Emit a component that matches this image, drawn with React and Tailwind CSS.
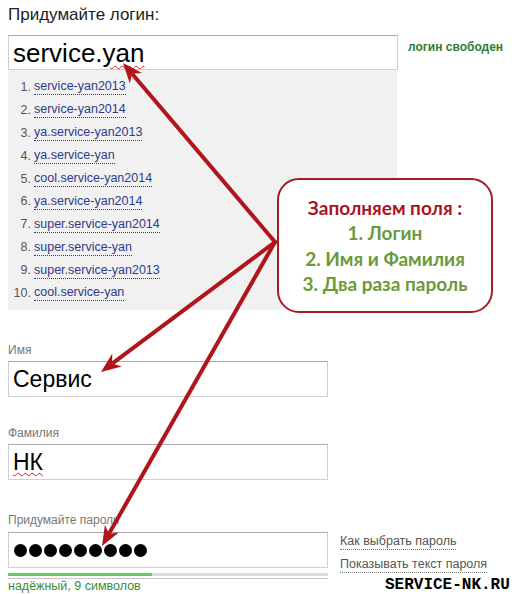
import React from "react";

const suggestions = [
  "service-yan2013",
  "service-yan2014",
  "ya.service-yan2013",
  "ya.service-yan",
  "cool.service-yan2014",
  "ya.service-yan2014",
  "super.service-yan2014",
  "super.service-yan",
  "super.service-yan2013",
  "cool.service-yan",
];

function Arrows() {
  const c = "#b0151c";
  const sx = 275, sy = 242;
  const tips = [
    [123, 63],
    [101, 372],
    [102, 546],
  ];
  return (
    <svg className="absolute left-0 top-0 pointer-events-none" width="516" height="594" viewBox="0 0 516 594">
      {tips.map(([tx, ty], i) => {
        const dx = tx - sx, dy = ty - sy;
        const len = Math.hypot(dx, dy);
        const ux = dx / len, uy = dy / len;
        const hl = 20, hw = 8;
        const bx = tx - ux * hl, by = ty - uy * hl;
        const px = -uy, py = ux;
        const lx = tx - ux * (hl - 4), ly = ty - uy * (hl - 4);
        return (
          <g key={i}>
            <line x1={sx} y1={sy} x2={lx} y2={ly} stroke={c} strokeWidth="4" strokeLinecap="round" />
            <polygon
              points={`${tx},${ty} ${bx + px * hw},${by + py * hw} ${tx - ux * (hl - 6)},${ty - uy * (hl - 6)} ${bx - px * hw},${by - py * hw}`}
              fill={c}
            />
          </g>
        );
      })}
    </svg>
  );
}

export default function App() {
  return (
    <div className="relative w-[516px] h-[594px] overflow-hidden bg-white font-['Liberation_Sans',Arial,sans-serif]">
      <div className="pl-[8px] pt-[5px]">
        <div className="text-[17px] leading-[20px] text-[#222]">Придумайте логин:</div>

        <div className="mt-[10px] flex items-start">
          <div className="w-[390px]">
            <div className="h-[35px] border border-[#d0d0d0] border-t-[#a8a8a8] bg-white flex items-center pl-[4px]">
              <span className="text-[26px] leading-[30px] text-black">
                service.
                <span className="underline decoration-wavy decoration-[#d02020] decoration-1 underline-offset-[3px]">yan</span>
              </span>
            </div>
            <div className="w-[389px] h-[240px] bg-[#f1f1f1] pt-[6px] text-[12.5px]">
              {suggestions.map((s, i) => (
                <div key={i} className="flex items-center h-[22.9px]">
                  <span className="w-[26px] text-right text-[#555] pr-[3px] leading-[15px]">{i + 1}.</span>
                  <span className="text-[#2e3a8c] border-b border-dotted border-[#2e3a8c] leading-[15px]">{s}</span>
                </div>
              ))}
            </div>
          </div>
          <div className="ml-[10px] mt-[3px] text-[12px] font-bold text-[#2f7d32]">логин свободен</div>
        </div>

        <div className="mt-[33px] text-[12px] leading-[14px] text-[#777]">Имя</div>
        <div className="mt-[4px] w-[320px] h-[36px] border border-[#d0d0d0] border-t-[#a8a8a8] flex items-center pl-[4px]">
          <span className="text-[23px] leading-[28px] text-black">Сервис</span>
        </div>

        <div className="mt-[29px] text-[12px] leading-[14px] text-[#777]">Фамилия</div>
        <div className="mt-[4px] w-[320px] h-[36px] border border-[#d0d0d0] border-t-[#a8a8a8] flex items-center pl-[4px]">
          <span className="text-[23px] leading-[28px] text-black underline decoration-wavy decoration-[#d02020] decoration-1 underline-offset-[2px]">НК</span>
        </div>

        <div className="mt-[33px] text-[12px] leading-[14px] text-[#777]">Придумайте пароль</div>
        <div className="flex items-start">
          <div className="w-[320px]">
            <div className="mt-[5px] h-[36px] border border-[#d0d0d0] border-t-[#a8a8a8] flex items-center pl-[5px] gap-[2px]">
              {Array.from({ length: 9 }).map((_, i) => (
                <span key={i} className="w-[13px] h-[13px] rounded-full bg-black" />
              ))}
            </div>
            <div className="mt-[5px] h-[3px] bg-[#dcdcdc] flex">
              <div className="w-[144px] h-[3px] bg-[#5fcf5f]" />
            </div>
            <div className="mt-[2px] h-[1px] bg-[#c8c8c8]" />
            <div className="text-[12.5px] leading-[14px] text-[#3b8a3b] mt-[0px]">надёжный, 9 символов</div>
          </div>
          <div className="ml-[12px] mt-[7px] text-[12.5px] text-[#555] flex flex-col items-start">
            <span className="border-b border-dotted border-[#777] leading-[15px]">Как выбрать пароль</span>
            <span className="mt-[7px] border-b border-dotted border-[#777] leading-[15px]">Показывать текст пароля</span>
          </div>
        </div>
      </div>

      <Arrows />

      <div className="absolute left-[277px] top-[178px] w-[216px] h-[135px] rounded-[22px] border-2 border-[#a51d24] bg-white flex flex-col items-center justify-center font-['Lato',sans-serif] font-bold text-[19px] leading-[25.5px]">
        <div className="text-[#a8141e]">Заполняем поля :</div>
        <div className="text-[#6a9a3a]">1. Логин</div>
        <div className="text-[#6a9a3a]">2. Имя и Фамилия</div>
        <div className="text-[#6a9a3a]">3. Два раза пароль</div>
      </div>

      <div className="absolute left-[385px] top-[576px] font-['Liberation_Mono',monospace] font-bold text-[16px] leading-[18px] text-black">
        SERVICE-NK.RU
      </div>
    </div>
  );
}
